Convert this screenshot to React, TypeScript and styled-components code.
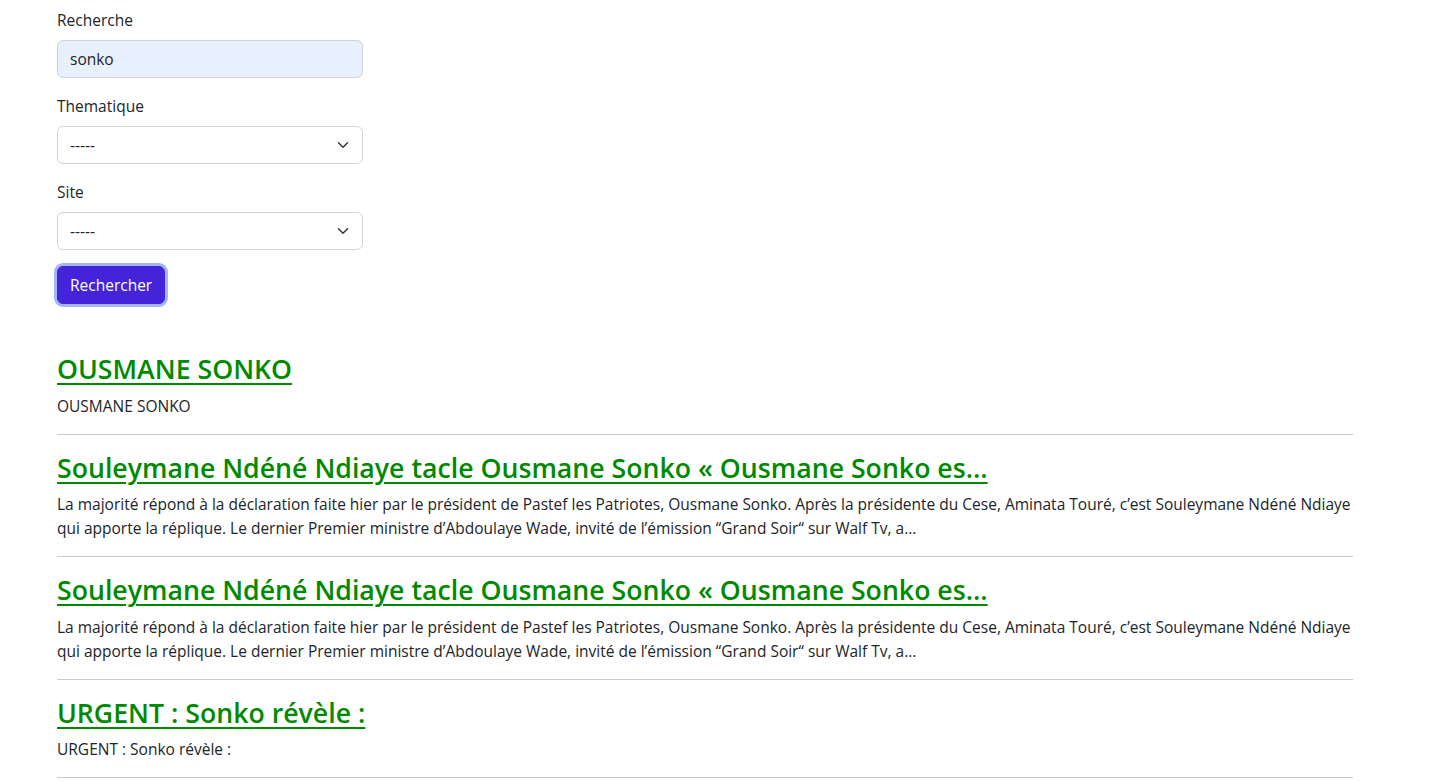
import React from "react";
import styled, { createGlobalStyle } from "styled-components";

const GlobalStyle = createGlobalStyle`
  html, body { margin: 0; padding: 0; background: #fff; }
  body {
    font-family: "Open Sans", "Noto Sans", sans-serif;
    color: #212529;
    font-size: 15.5px;
    line-height: 1.5;
  }
  * { box-sizing: border-box; }
`;

const Page = styled.main`
  padding: 8px 0 0 57px;
  width: 1353px;
`;

const Form = styled.form`
  width: 306px;
  display: flex;
  flex-direction: column;
`;

const Field = styled.div`
  margin-bottom: 16px;
`;

const Label = styled.label`
  display: block;
  font-size: 15.5px;
  line-height: 24px;
  margin-bottom: 8px;
`;

const Input = styled.input<{ $filled?: boolean }>`
  display: block;
  width: 100%;
  height: 38px;
  padding: 6px 12px;
  font-family: inherit;
  font-size: 15.5px;
  color: #212529;
  background: ${(p) => (p.$filled ? "#e8f0fe" : "#fff")};
  border: 1px solid #ced4da;
  border-radius: 6px;
  outline: none;
`;

const SelectWrap = styled.div`
  position: relative;
  height: 38px;
`;

const Select = styled.select`
  appearance: none;
  display: block;
  width: 100%;
  height: 38px;
  padding: 6px 36px 6px 12px;
  font-family: inherit;
  font-size: 15.5px;
  color: #212529;
  background: #fff;
  border: 1px solid #ced4da;
  border-radius: 6px;
  outline: none;
`;

const Chevron = styled.svg`
  position: absolute;
  right: 14px;
  top: 13px;
  width: 12px;
  height: 12px;
  pointer-events: none;
`;

const Button = styled.button`
  align-self: flex-start;
  height: 38px;
  padding: 6px 12px;
  font-family: inherit;
  font-size: 15.5px;
  color: #fff;
  background: #4324d9;
  border: 1px solid #4324d9;
  border-radius: 6px;
  box-shadow: 0 0 0 3px #a2b6f8;
  cursor: pointer;
`;

const Results = styled.section`
  margin-top: 48px;
  width: 1296px;
`;

const Title = styled.h3`
  margin: 0 0 8px;
  font-size: 26.7px;
  line-height: 33.6px;
  font-weight: 600;
`;

const TitleLink = styled.a`
  color: #008a00;
  text-decoration: underline;
  text-decoration-thickness: 2px;
  text-underline-offset: 4px;
`;

const Summary = styled.p`
  margin: 0 0 16px;
  font-size: 15.5px;
  line-height: 24px;
`;

const Rule = styled.hr`
  margin: 16px 0;
  border: 0;
  border-top: 1px solid #c9cacb;
`;

const longSummary =
  "La majorité répond à la déclaration faite hier par le président de Pastef les Patriotes, Ousmane Sonko. Après la présidente du Cese, Aminata Touré, c’est Souleymane Ndéné Ndiaye qui apporte la réplique. Le dernier Premier ministre d’Abdoulaye Wade, invité de l’émission “Grand Soir“ sur Walf Tv, a...";

const items = [
  { title: "OUSMANE SONKO", summary: "OUSMANE SONKO" },
  {
    title: "Souleymane Ndéné Ndiaye tacle Ousmane Sonko « Ousmane Sonko es...",
    summary: longSummary,
  },
  {
    title: "Souleymane Ndéné Ndiaye tacle Ousmane Sonko « Ousmane Sonko es...",
    summary: longSummary,
  },
  { title: "URGENT : Sonko révèle :", summary: "URGENT : Sonko révèle :" },
];

const ChevronIcon = () => (
  <Chevron viewBox="0 0 16 16" fill="none">
    <path
      d="m2 5 6 6 6-6"
      stroke="#343a40"
      strokeWidth="2"
      strokeLinecap="round"
      strokeLinejoin="round"
    />
  </Chevron>
);

export default function App() {
  return (
    <>
      <GlobalStyle />
      <Page>
        <Form onSubmit={(e) => e.preventDefault()}>
          <Field>
            <Label htmlFor="q">Recherche</Label>
            <Input id="q" $filled defaultValue="sonko" />
          </Field>
          <Field>
            <Label htmlFor="theme">Thematique</Label>
            <SelectWrap>
              <Select id="theme" defaultValue="">
                <option value="">-----</option>
              </Select>
              <ChevronIcon />
            </SelectWrap>
          </Field>
          <Field>
            <Label htmlFor="site">Site</Label>
            <SelectWrap>
              <Select id="site" defaultValue="">
                <option value="">-----</option>
              </Select>
              <ChevronIcon />
            </SelectWrap>
          </Field>
          <Button type="submit">Rechercher</Button>
        </Form>
        <Results>
          {items.map((it, i) => (
            <article key={i}>
              <Title>
                <TitleLink href="#">{it.title}</TitleLink>
              </Title>
              <Summary>{it.summary}</Summary>
              <Rule />
            </article>
          ))}
        </Results>
      </Page>
    </>
  );
}
